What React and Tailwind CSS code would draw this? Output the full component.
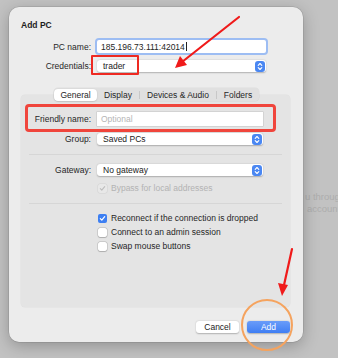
import React from 'react';

const Stepper = () => (
  <span className="flex h-[11px] w-[10px] items-center justify-center rounded-[3px] bg-[#4a87f2]">
    <svg width="6" height="9" viewBox="0 0 6 9" fill="none" stroke="white" strokeWidth="1.1" strokeLinecap="round" strokeLinejoin="round">
      <path d="M1.2 3.3 L3 1.5 L4.8 3.3" />
      <path d="M1.2 5.7 L3 7.5 L4.8 5.7" />
    </svg>
  </span>
);

const Popup = ({ value, width }) => (
  <div className={`flex h-[12px] ${width} items-center justify-between rounded-[3px] bg-white pl-[6px] pr-[1px] shadow-[0_0.5px_1.5px_rgba(0,0,0,0.25)]`}>
    <span className="text-[#222]">{value}</span>
    <Stepper />
  </div>
);

const Check = ({ checked, disabled }) => {
  if (disabled) {
    return (
      <span className="flex h-[9px] w-[9px] items-center justify-center rounded-[2px] bg-[#e8e8e8] shadow-[0_0_0_0.5px_rgba(0,0,0,0.08)]">
        <svg width="7" height="7" viewBox="0 0 7 7" fill="none" stroke="#bdbdbd" strokeWidth="1.1" strokeLinecap="round" strokeLinejoin="round">
          <path d="M1.3 3.7 L2.8 5.2 L5.7 1.6" />
        </svg>
      </span>
    );
  }
  if (checked) {
    return (
      <span className="flex h-[9px] w-[9px] items-center justify-center rounded-[2px] bg-[#3d7ff2]">
        <svg width="7" height="7" viewBox="0 0 7 7" fill="none" stroke="white" strokeWidth="1.2" strokeLinecap="round" strokeLinejoin="round">
          <path d="M1.3 3.7 L2.8 5.2 L5.7 1.6" />
        </svg>
      </span>
    );
  }
  return <span className="h-[9px] w-[9px] rounded-[2px] bg-white shadow-[0_0_0_0.5px_rgba(0,0,0,0.2),0_0.5px_1px_rgba(0,0,0,0.15)]" />;
};

const tabs = [
  { name: 'General', w: 'w-[43px]' },
  { name: 'Display', w: 'w-[42px]' },
  { name: 'Devices & Audio', w: 'w-[77px]' },
  { name: 'Folders', w: 'w-[43px]' },
];

export default function App() {
  return (
    <div className="relative h-[358px] w-[338px] overflow-hidden bg-[#c2c2c2] text-[8.5px] leading-[10px] text-[#262626]" style={{ fontFamily: '"Liberation Sans", Arial, sans-serif' }}>
      {/* window behind the sheet */}
      <div className="absolute left-[305px] top-[191px] z-0 whitespace-nowrap text-[9.5px] leading-[12px] text-[#adadad]">
        <div>u through</div>
        <div className="pl-[2px]">account</div>
      </div>

      <div className="relative z-10 ml-[9px] mt-[7px] flex h-[335px] w-[294px] flex-col rounded-[10px] bg-[#ececec] pt-[13px] shadow-[0_4px_16px_rgba(0,0,0,0.25),0_0_0_0.5px_rgba(0,0,0,0.15)]">
        <div className="ml-[12px] h-[10px] font-bold text-[#1d1d1d]">Add PC</div>

        <div className="mt-[10px] flex items-center">
          <div className="w-[82px] text-right">PC name:</div>
          <div className="ml-[6px] flex h-[13px] w-[169px] items-center rounded-[2px] bg-white pl-[4px] shadow-[0_0_0_2px_#9dbdf3]">
            <span>185.196.73.111:42014</span>
            <span className="ml-[1px] h-[9px] w-px bg-[#222]" />
          </div>
        </div>

        <div className="mt-[7px] flex items-center">
          <div className="w-[82px] text-right">Credentials:</div>
          <div className="ml-[6px]">
            <Popup value="trader" width="w-[169px]" />
          </div>
        </div>

        <div className="relative z-10 ml-[45px] mt-[16px] flex h-[13px] w-[205px] items-center rounded-[4px] bg-[#e0e0e0] shadow-[0_0_0_0.5px_rgba(0,0,0,0.06)]">
          {tabs.map((t, i) => (
            <div key={t.name} className={`flex h-full ${t.w} items-center justify-center`}>
              {i === 0 ? (
                <span className="flex h-[12px] w-full items-center justify-center rounded-[4px] bg-white shadow-[0_0.5px_1.5px_rgba(0,0,0,0.2)]">{t.name}</span>
              ) : (
                <span className="flex w-full items-center justify-center">
                  {i > 1 && <span className="mr-auto h-[8px] w-px bg-[#c8c8c8]" />}
                  <span className={i > 1 ? 'mr-auto' : ''}>{t.name}</span>
                </span>
              )}
            </div>
          ))}
        </div>

        <div className="-mt-[6px] ml-[12px] flex h-[212px] w-[269px] flex-col rounded-[4px] bg-[#e4e4e4] pt-[17px] shadow-[0_0_0_0.5px_rgba(0,0,0,0.05)]">
          <div className="flex items-center">
            <div className="w-[70px] text-right">Friendly name:</div>
            <div className="ml-[6px] flex h-[14px] w-[166px] items-center bg-white pl-[4px] text-[#b5b5b5] shadow-[0_0_0_0.5px_rgba(0,0,0,0.15)]">Optional</div>
          </div>

          <div className="mt-[7px] flex items-center">
            <div className="w-[70px] text-right">Group:</div>
            <div className="ml-[6px]">
              <Popup value="Saved PCs" width="w-[166px]" />
            </div>
          </div>

          <div className="mx-[8px] mt-[9px] h-px bg-[#d6d6d6]" />

          <div className="mt-[9px] flex items-center">
            <div className="w-[70px] text-right">Gateway:</div>
            <div className="ml-[6px]">
              <Popup value="No gateway" width="w-[166px]" />
            </div>
          </div>

          <div className="ml-[77px] mt-[7px] flex h-[10px] items-center gap-[4px] text-[#b3b3b3]">
            <Check disabled />
            <span>Bypass for local addresses</span>
          </div>

          <div className="mx-[8px] mt-[10px] h-px bg-[#d6d6d6]" />

          <div className="ml-[77px] mt-[9px] flex flex-col gap-[4px]">
            <div className="flex h-[10px] items-center gap-[4px]">
              <Check checked />
              <span>Reconnect if the connection is dropped</span>
            </div>
            <div className="flex h-[10px] items-center gap-[4px]">
              <Check />
              <span>Connect to an admin session</span>
            </div>
            <div className="flex h-[10px] items-center gap-[4px]">
              <Check />
              <span>Swap mouse buttons</span>
            </div>
          </div>
        </div>

        <div className="mr-[13px] mt-[14px] flex justify-end gap-[8px]">
          <button className="flex h-[12px] w-[43px] items-center justify-center rounded-[3px] bg-white text-[#222] shadow-[0_0.5px_1.5px_rgba(0,0,0,0.25)]">Cancel</button>
          <button className="flex h-[12px] w-[43px] items-center justify-center rounded-[3px] bg-gradient-to-b from-[#6a9cf9] to-[#3f7ef3] text-white shadow-[0_0.5px_1.5px_rgba(0,0,0,0.25)]">Add</button>
        </div>
      </div>

      {/* annotations */}
      <div className="absolute left-[91px] top-[55px] z-20 h-[20px] w-[48px] rounded-[1px] border-[2.5px] border-[#ee2a22]" />
      <div className="absolute left-[25px] top-[104px] z-20 h-[28px] w-[251px] rounded-[4px] border-[3px] border-[#f0453c]" />
      <div className="absolute left-[241px] top-[299px] z-20 h-[52px] w-[52px] rounded-full border-2 border-[#f5a35e]" />
      <svg className="absolute left-0 top-0 z-30" width="338" height="358" viewBox="0 0 338 358">
        <line x1="239" y1="17" x2="182" y2="62" stroke="#f01a1a" strokeWidth="2.2" strokeLinecap="round" />
        <polygon points="175,68 180,56 187,65" fill="#f01a1a" />
        <line x1="292" y1="249" x2="284" y2="285" stroke="#f01a1a" strokeWidth="2.2" strokeLinecap="round" />
        <polygon points="282,296 278,283 288,285" fill="#f01a1a" />
      </svg>
    </div>
  );
}
